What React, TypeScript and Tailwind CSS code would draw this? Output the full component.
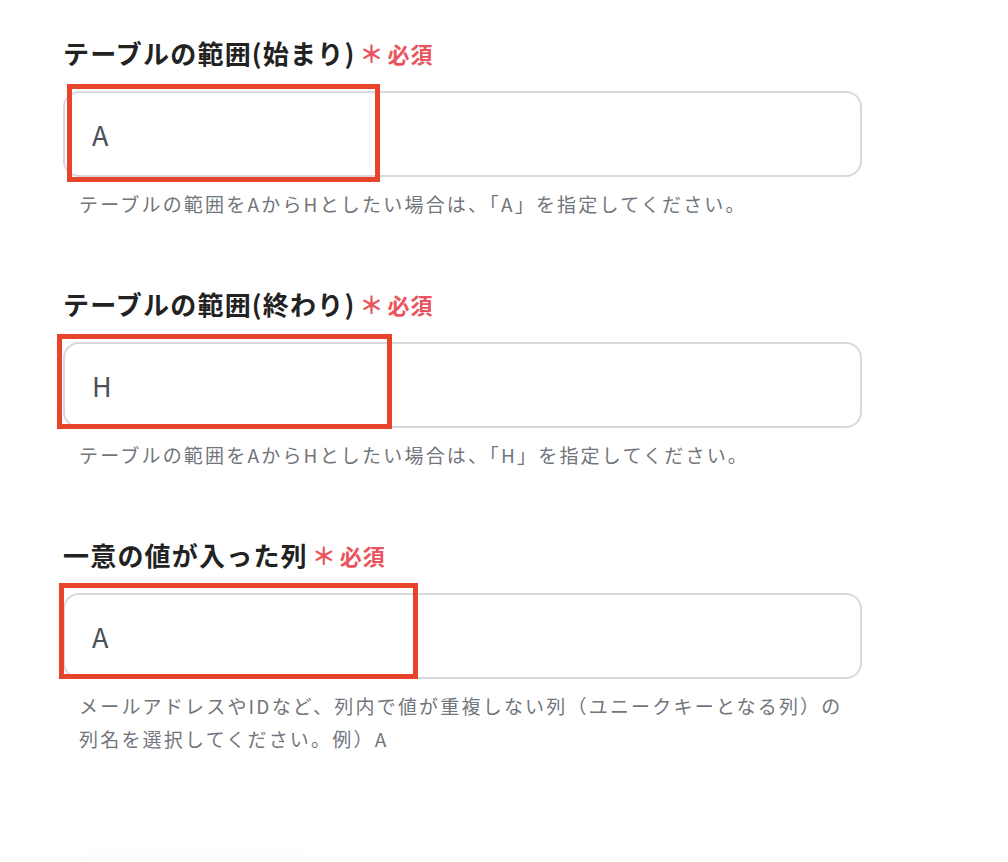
import React from "react";

const FONT = { fontFamily: '"Noto Sans CJK JP", "Noto Sans", sans-serif' };

function Field({
  label,
  value,
  help,
}: {
  label: string;
  value: string;
  help: React.ReactNode;
}) {
  return (
    <div>
      <div className="flex items-center h-[36px]">
        <span className="text-[26px] font-bold leading-[36px] tracking-[1.2px] text-[#222222] whitespace-nowrap">
          {label}
        </span>
        <span className="ml-[4px] text-[22px] leading-[36px] text-[#e9545d] font-bold whitespace-nowrap flex items-center">
          <span className="mr-[4px] text-[24px]">＊</span>
          <span className="tracking-[1px]">必須</span>
        </span>
      </div>
      <div className="mt-[20px] h-[86px] rounded-[16px] border-2 border-[#d6d9dd] bg-white flex items-center pl-[27px]">
        <span className="text-[27px] text-[#4b5059] leading-none">{value}</span>
      </div>
      <div className="mt-[10px] px-[16px] text-[19px] leading-[33px] tracking-[2.2px] text-[#71757c] whitespace-nowrap">
        {help}
      </div>
    </div>
  );
}

export default function App() {
  return (
    <div className="relative w-[1008px] h-[862px] bg-white overflow-hidden" style={FONT}>
      <div className="w-[799px] ml-[63px] pt-[35px] flex flex-col gap-[66px]">
        <Field
          label="テーブルの範囲(始まり)"
          value="A"
          help="テーブルの範囲をAからHとしたい場合は、「A」を指定してください。"
        />
        <Field
          label="テーブルの範囲(終わり)"
          value="H"
          help="テーブルの範囲をAからHとしたい場合は、「H」を指定してください。"
        />
        <Field
          label="一意の値が入った列"
          value="A"
          help={
            <>
              <div>メールアドレスやIDなど、列内で値が重複しない列（ユニークキーとなる列）の</div>
              <div>列名を選択してください。例）A</div>
            </>
          }
        />
      </div>

      {/* annotation boxes */}
      <div className="absolute left-[67px] top-[84px] w-[313px] h-[98px] border-[5px] border-[#e8432b]" />
      <div className="absolute left-[57px] top-[334px] w-[335px] h-[95px] border-[5px] border-[#e8432b]" />
      <div className="absolute left-[59px] top-[583px] w-[359px] h-[96px] border-[5px] border-[#e8432b]" />

      {/* faint element at the bottom edge */}
      <div className="absolute left-[80px] top-[854px] w-[230px] h-[40px] rounded-[20px] bg-white shadow-[0_-2px_10px_rgba(0,0,0,0.015)]" />
    </div>
  );
}
